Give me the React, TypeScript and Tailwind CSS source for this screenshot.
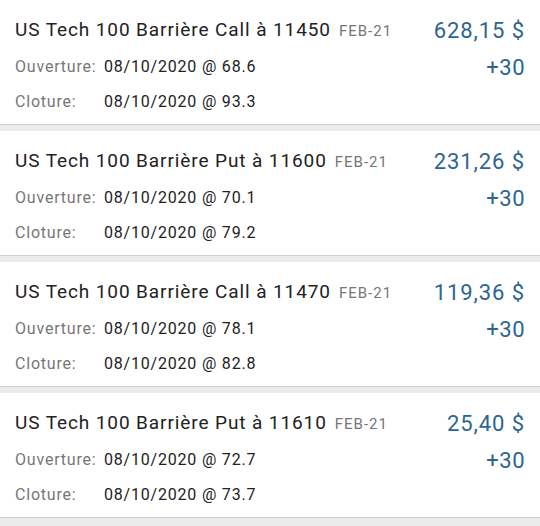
const TRADES = [
  { strike: "Call à 11450", price: "628,15 $", open: "08/10/2020 @ 68.6", close: "08/10/2020 @ 93.3" },
  { strike: "Put à 11600", price: "231,26 $", open: "08/10/2020 @ 70.1", close: "08/10/2020 @ 79.2" },
  { strike: "Call à 11470", price: "119,36 $", open: "08/10/2020 @ 78.1", close: "08/10/2020 @ 82.8" },
  { strike: "Put à 11610", price: "25,40 $", open: "08/10/2020 @ 72.7", close: "08/10/2020 @ 73.7" },
];

function TradeCard({ strike, price, open, close }: (typeof TRADES)[number]) {
  return (
    <div className="h-[125px] shrink-0 bg-white border-b border-[#cfcfcf] px-[15px] pt-[16px] flex justify-between">
      <div>
        <div className="flex items-baseline gap-[8px] h-[30px]">
          <span className="text-[19px] tracking-[0.9px] text-[#222]">US Tech 100 Barrière {strike}</span>
          <span className="text-[15px] tracking-[1px] text-[#777]">FEB-21</span>
        </div>
        <div className="flex items-baseline mt-[9px] text-[16px] tracking-[0.8px] h-[24px]">
          <span className="w-[89px] text-[#777]">Ouverture:</span>
          <span className="text-[#222]">{open}</span>
        </div>
        <div className="flex items-baseline mt-[11px] text-[16px] tracking-[0.8px] h-[24px]">
          <span className="w-[89px] text-[#777]">Cloture:</span>
          <span className="text-[#222]">{close}</span>
        </div>
      </div>
      <div className="flex flex-col items-end text-[#2d6590]">
        <span className="text-[22px] tracking-[0.9px] leading-[30px]">{price}</span>
        <span className="text-[22px] tracking-[0.5px] leading-[30px] mt-[7px]">+30</span>
      </div>
    </div>
  );
}

export default function App() {
  return (
    <div className="w-[540px] h-[526px] overflow-hidden bg-[#ebebeb] flex flex-col gap-[6px] font-['Roboto',sans-serif]">
      {TRADES.map((t) => (
        <TradeCard key={t.strike} {...t} />
      ))}
    </div>
  );
}
